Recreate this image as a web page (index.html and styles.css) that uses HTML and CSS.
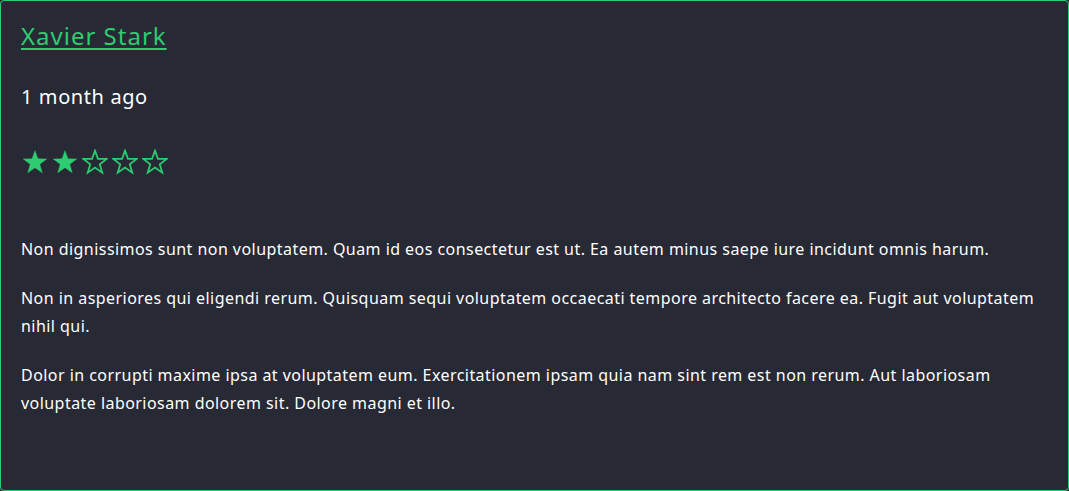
FILE: index.html
```html
<!DOCTYPE html>
<html>
<head>
<meta charset="utf-8">
<link rel="stylesheet" href="styles.css">
</head>
<body>
<article class="review">
  <a class="author" href="#">Xavier Stark</a>
  <p class="date">1 month ago</p>
  <div class="stars" aria-label="2 out of 5 stars">
    <svg class="star on" viewBox="0 0 24 24"><polygon points="12,1.5 14.7,9.1 22.8,9.2 16.4,14.1 18.7,21.9 12,17.2 5.3,21.9 7.6,14.1 1.2,9.2 9.3,9.1"/></svg>
    <svg class="star on" viewBox="0 0 24 24"><polygon points="12,1.5 14.7,9.1 22.8,9.2 16.4,14.1 18.7,21.9 12,17.2 5.3,21.9 7.6,14.1 1.2,9.2 9.3,9.1"/></svg>
    <svg class="star off" viewBox="0 0 24 24"><polygon points="12,1.5 14.7,9.1 22.8,9.2 16.4,14.1 18.7,21.9 12,17.2 5.3,21.9 7.6,14.1 1.2,9.2 9.3,9.1"/></svg>
    <svg class="star off" viewBox="0 0 24 24"><polygon points="12,1.5 14.7,9.1 22.8,9.2 16.4,14.1 18.7,21.9 12,17.2 5.3,21.9 7.6,14.1 1.2,9.2 9.3,9.1"/></svg>
    <svg class="star off" viewBox="0 0 24 24"><polygon points="12,1.5 14.7,9.1 22.8,9.2 16.4,14.1 18.7,21.9 12,17.2 5.3,21.9 7.6,14.1 1.2,9.2 9.3,9.1"/></svg>
  </div>
  <div class="body">
    <p>Non dignissimos sunt non voluptatem. Quam id eos consectetur est ut. Ea autem minus saepe iure incidunt omnis harum.</p>
    <p>Non in asperiores qui eligendi rerum. Quisquam sequi voluptatem occaecati tempore architecto facere ea. Fugit aut voluptatem nihil qui.</p>
    <p>Dolor in corrupti maxime ipsa at voluptatem eum. Exercitationem ipsam quia nam sint rem est non rerum. Aut laboriosam voluptate laboriosam dolorem sit. Dolore magni et illo.</p>
  </div>
</article>
</body>
</html>
```
FILE: styles.css
```css
html, body {
  margin: 0;
  height: 100%;
  background: #272935;
}
.review {
  box-sizing: border-box;
  height: 491px;
  background: #272935;
  border: 1px solid #2ecc71;
  border-radius: 4px;
  padding: 19px 20px;
  font-family: "Noto Sans", sans-serif;
  color: #ffffff;
}
.author {
  display: inline-block;
  font-size: 24px;
  line-height: 32px;
  letter-spacing: 1px;
  color: #2ecc71;
  text-decoration: underline;
  text-decoration-thickness: 2px;
  text-underline-offset: 3px;
}
.date {
  margin: 31px 0 0;
  font-size: 20px;
  line-height: 28px;
  letter-spacing: 0.6px;
}
.stars {
  display: flex;
  gap: 4px;
  margin-top: 38px;
  margin-left: 1px;
  height: 28px;
}
.star {
  width: 26px;
  height: 26px;
}
.star polygon {
  stroke: #2ecc71;
  stroke-linejoin: miter;
}
.star.on polygon {
  fill: #2ecc71;
  stroke-width: 0.4;
}
.star.off polygon {
  fill: none;
  stroke-width: 1.6;
}
.body {
  margin-top: 58px;
  font-size: 16px;
  line-height: 28px;
  letter-spacing: 0.45px;
}
.body p {
  margin: 0 0 21px;
}
```
